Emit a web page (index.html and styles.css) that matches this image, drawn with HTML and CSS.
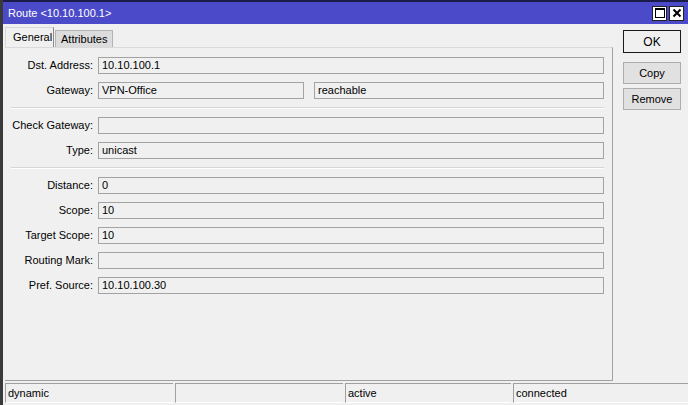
FILE: index.html
```html
<!DOCTYPE html>
<html>
<head>
<meta charset="utf-8">
<link rel="stylesheet" href="styles.css">
</head>
<body>
<div class="window">
  <div class="titlebar">
    <span class="title">Route &lt;10.10.100.1&gt;</span>
    <div class="tb-buttons">
      <span class="tb-btn"><svg width="12" height="12" viewBox="0 0 12 12"><rect x="1.5" y="1.5" width="9" height="9" fill="none" stroke="#000" stroke-width="1"/><line x1="1.5" y1="2.5" x2="10.5" y2="2.5" stroke="#000" stroke-width="1"/></svg></span>
      <span class="tb-btn"><svg width="12" height="12" viewBox="0 0 12 12"><path d="M2.5 2.5 L9.5 9.5 M9.5 2.5 L2.5 9.5" stroke="#000" stroke-width="2"/></svg></span>
    </div>
  </div>
  <div class="main">
    <div class="left">
      <div class="tabs">
        <div class="tab active">General</div>
        <div class="tab">Attributes</div>
      </div>
      <div class="panel">
        <div class="row"><label>Dst. Address:</label><div class="field">10.10.100.1</div></div>
        <div class="row"><label>Gateway:</label><div class="field gw">VPN-Office</div><div class="field">reachable</div></div>
        <div class="sep"></div>
        <div class="row"><label>Check Gateway:</label><div class="field"></div></div>
        <div class="row"><label>Type:</label><div class="field">unicast</div></div>
        <div class="sep"></div>
        <div class="row"><label>Distance:</label><div class="field">0</div></div>
        <div class="row"><label>Scope:</label><div class="field">10</div></div>
        <div class="row"><label>Target Scope:</label><div class="field">10</div></div>
        <div class="row"><label>Routing Mark:</label><div class="field"></div></div>
        <div class="row"><label>Pref. Source:</label><div class="field">10.10.100.30</div></div>
      </div>
    </div>
    <div class="side">
      <div class="btn default">OK</div>
      <div class="btn">Copy</div>
      <div class="btn">Remove</div>
    </div>
  </div>
  <div class="statusbar">
    <div class="cell">dynamic</div>
    <div class="cell"></div>
    <div class="cell">active</div>
    <div class="cell last">connected</div>
  </div>
</div>
</body>
</html>
```

FILE: styles.css
```css
html, body {
  margin: 0;
  padding: 0;
  background: #f0f0f0;
}
body {
  width: 688px;
  height: 405px;
  overflow: hidden;
  font-family: "Liberation Sans", Arial, sans-serif;
  font-size: 11px;
  color: #000;
}
.window {
  width: 688px;
  height: 405px;
  box-sizing: border-box;
  border-left: 3px solid #3a3a3a;
  display: flex;
  flex-direction: column;
  background: #f0f0f0;
}
.titlebar {
  height: 24px;
  box-sizing: border-box;
  border-top: 2px solid #1c1c4a;
  background: #4b4bc9;
  display: flex;
  align-items: center;
  justify-content: space-between;
  padding: 0 4px 0 5px;
}
.title {
  color: #fff;
  font-size: 11px;
}
.tb-buttons {
  display: flex;
  gap: 2px;
}
.tb-btn {
  width: 13px;
  height: 13px;
  background: #fff;
  border: 1px solid #222;
  display: flex;
  align-items: center;
  justify-content: center;
}
.main {
  flex: 1;
  display: flex;
}
.left {
  width: 610px;
  flex-shrink: 0;
  padding-left: 2px;
  padding-top: 3px;
  box-sizing: border-box;
  display: flex;
  flex-direction: column;
}
.tabs {
  display: flex;
  align-items: flex-end;
  height: 20px;
}
.tab {
  height: 17px;
  box-sizing: border-box;
  padding: 2px 5px 0 5px;
  background: #dcdcdc;
  border: 1px solid #b4b4b4;
  border-bottom: none;
  font-size: 11px;
}
.tab.active {
  height: 20px;
  width: 49px;
  padding: 3px 0 0 7px;
  background: #f0f0f0;
  border: 1px solid #d8d8d8;
  border-right: 1px solid #8c8c8c;
  border-bottom: none;
  margin-right: 1px;
}
.panel {
  flex: 1;
  border-top: 1px solid #dadada;
  border-right: 1px solid #a0a0a0;
  border-bottom: 1px solid #a0a0a0;
  padding: 9px 8px 0 0;
  display: flex;
  flex-direction: column;
}
.row {
  display: flex;
  height: 17px;
  margin-bottom: 8px;
  align-items: stretch;
}
.row label {
  text-align: right;
  padding-right: 5px;
  box-sizing: border-box;
  line-height: 17px;
  flex-shrink: 0;
  width: 93px;
}
.field {
  flex: 1;
  border: 1px solid #a3a3a3;
  background: #f0f0f0;
  box-sizing: border-box;
  padding-left: 3px;
  line-height: 15px;
}
.field.gw {
  flex: 0 0 206px;
  margin-right: 10px;
}
.sep {
  height: 1px;
  border-top: 1px solid #d6d6d6;
  background: #fdfdfd;
  margin: 0 0 8px 6px;
}
.side {
  flex: 1;
  padding: 6px 0 0 10px;
  display: flex;
  flex-direction: column;
  gap: 4px;
}
.btn {
  width: 58px;
  height: 22px;
  box-sizing: border-box;
  border: 1px solid #adadad;
  background: #e1e1e1;
  display: flex;
  align-items: center;
  justify-content: center;
  font-size: 11px;
}
.btn.default {
  height: 23px;
  border: 1px solid #1a1a1a;
  background: #f0f0f0;
  font-size: 12px;
  margin-bottom: 5px;
}
.statusbar {
  height: 24px;
  display: flex;
  padding: 2px 0 2px 2px;
  box-sizing: border-box;
  gap: 2px;
}
.cell {
  width: 168px;
  box-sizing: border-box;
  border-top: 1px solid #a0a0a0;
  border-left: 1px solid #a0a0a0;
  border-bottom: 1px solid #ffffff;
  padding-left: 2px;
  line-height: 19px;
}
.cell:nth-child(3) {
  width: 166px;
}
.cell.last {
  flex: 1;
}
```
